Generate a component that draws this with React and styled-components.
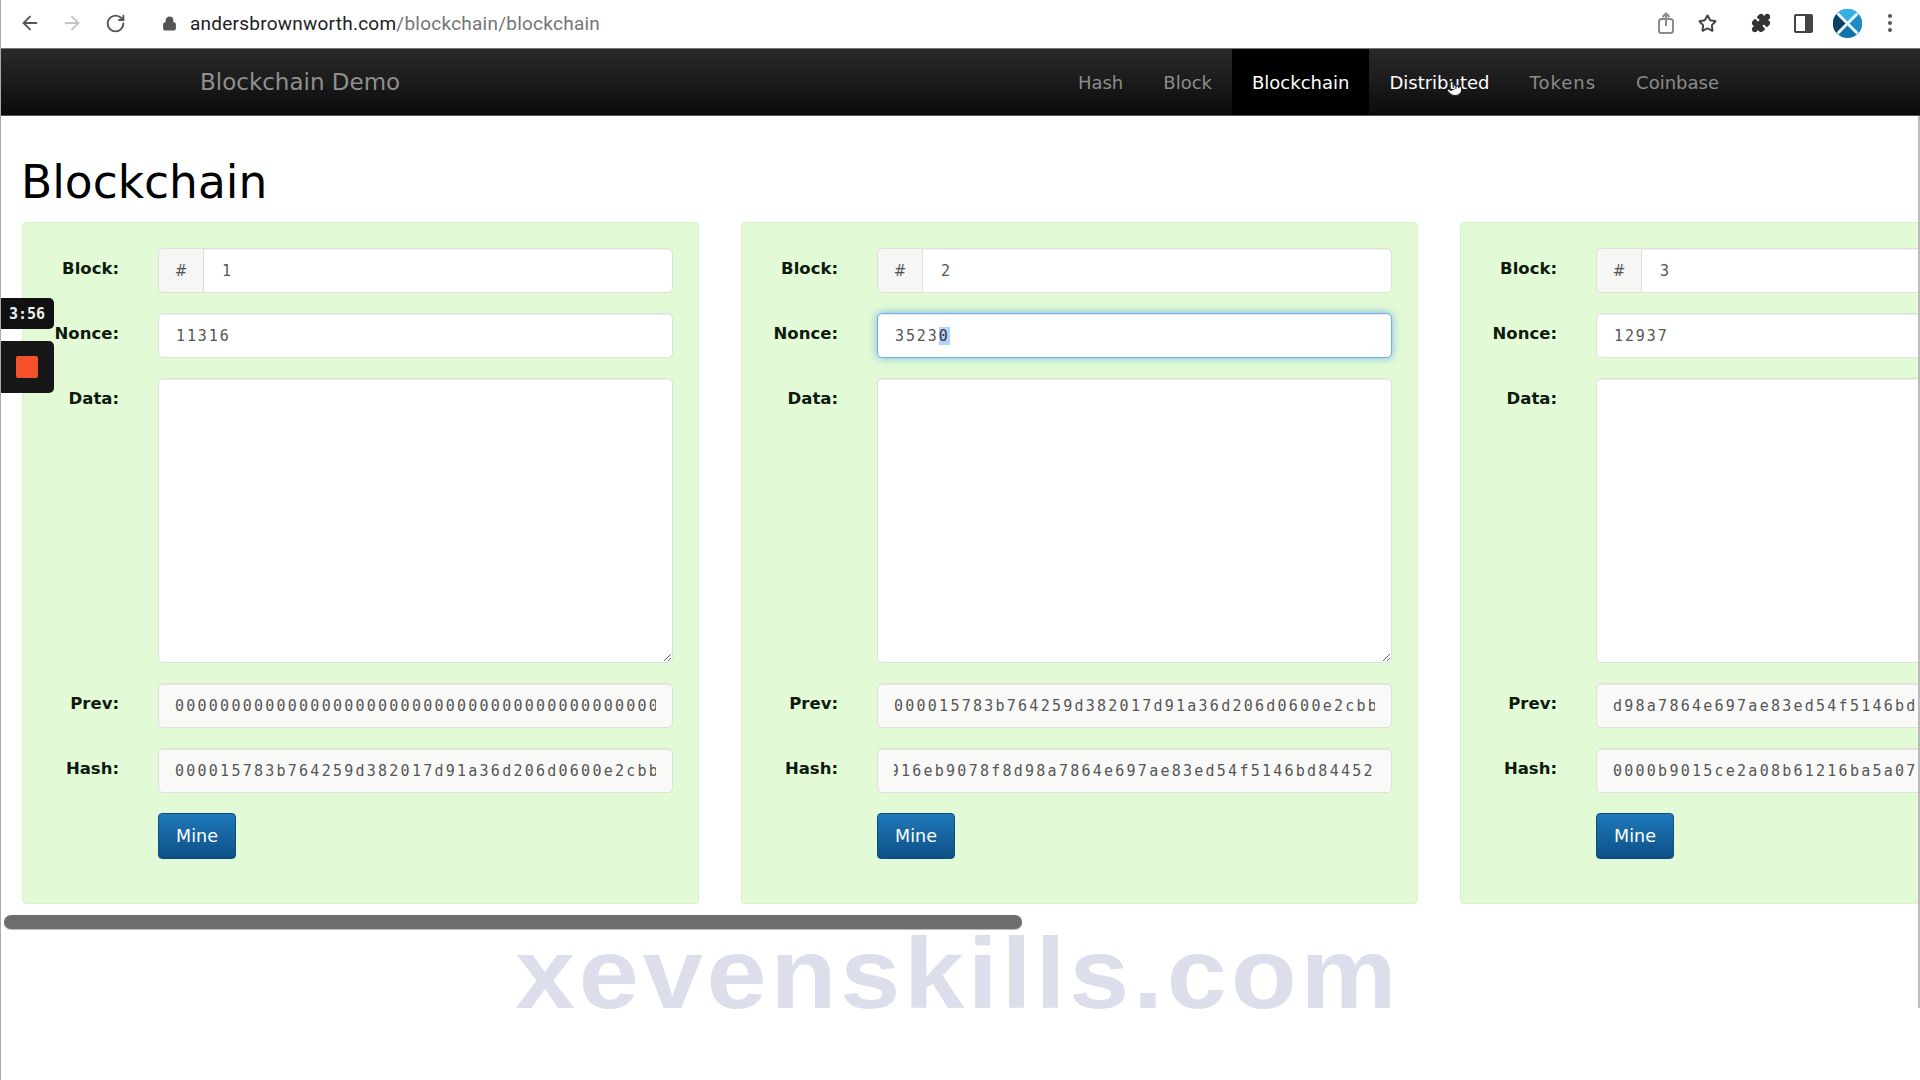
import React, { useEffect, useRef } from "react";
import styled, { createGlobalStyle } from "styled-components";
import { ArrowLeft, ArrowRight, RotateCw, Lock, Star, Puzzle, Pointer } from "lucide-react";

const blocks = [
  {
    id: 1,
    nonce: "11316",
    prev: "0000000000000000000000000000000000000000000000000000000000000000",
    hash: "000015783b764259d382017d91a36d206d0600e2cbb3567748f46a33fe9297cf",
  },
  {
    id: 2,
    nonce: "35230",
    focused: true,
    prev: "000015783b764259d382017d91a36d206d0600e2cbb3567748f46a33fe9297cf",
    hash: "3a7c0e916eb9078f8d98a7864e697ae83ed54f5146bd84452c0b3e71a2f6d958",
    scrollHash: 72,
  },
  {
    id: 3,
    nonce: "12937",
    prev: "d98a7864e697ae83ed54f5146bd84452c0b3e71a2f6d958",
    hash: "0000b9015ce2a08b61216ba5a0778545dcc2ab2b1e2d7f5f6c9ad4b1a1f0c2e4",
  },
];

const navItems = ["Hash", "Block", "Blockchain", "Distributed", "Tokens", "Coinbase"];

const GlobalStyle = createGlobalStyle`
  html, body {
    margin: 0;
    padding: 0;
    background: #fff;
    overflow: hidden;
  }
  * {
    box-sizing: border-box;
  }
`;

const Page = styled.div`
  position: relative;
  width: 1920px;
  height: 1080px;
  overflow: hidden;
  border-left: 1px solid #aaa;
  font-family: "DejaVu Sans", sans-serif;
`;

const Toolbar = styled.div`
  height: 48px;
  display: flex;
  align-items: center;
  padding: 0 27px 2px 18px;
  background: #fff;
  color: #5f6368;
`;

const ToolIcon = styled.span`
  display: flex;
  align-items: center;
  justify-content: center;
  flex: none;
  margin-left: ${(p) => p.$gap || 0}px;
  color: ${(p) => p.$color || "#555"};
`;

const Url = styled.div`
  margin-left: 13px;
  font-family: Roboto, sans-serif;
  font-size: 19px;
  letter-spacing: 0.24px;
  color: #757575;
  white-space: nowrap;

  b {
    font-weight: 400;
    color: #202124;
  }
`;

const Spacer = styled.div`
  flex: 1;
`;

const Navbar = styled.nav`
  height: 68px;
  display: flex;
  align-items: stretch;
  justify-content: space-between;
  padding: 0 181px 0 199px;
  background: linear-gradient(#2a2a2a, #0b0b0b);
  border-top: 1px solid #777;
  border-bottom: 1px solid #555;
`;

const Brand = styled.div`
  display: flex;
  align-items: center;
  font-size: 23px;
  color: #8f8f8f;
`;

const NavList = styled.div`
  display: flex;
`;

const NavLink = styled.div`
  position: relative;
  display: flex;
  align-items: center;
  padding: 0 20px;
  font-size: 18px;
  letter-spacing: ${(p) => (p.$wide ? 1 : 0)}px;
  color: ${(p) => (p.$active || p.$hover ? "#fff" : "#8c8c8c")};
  background: ${(p) => (p.$active ? "#000" : "transparent")};
`;

const Cursor = styled.span`
  position: absolute;
  left: 77px;
  top: 31px;
  display: flex;
  color: #222;
`;

const Main = styled.main`
  height: 892px;
  border-right: 2px solid #bbb;
`;

const Title = styled.h1`
  margin: 0;
  padding: 40px 0 12px 20px;
  font-size: 45.5px;
  line-height: 54px;
  font-weight: 400;
  color: #000;
`;

const CardRow = styled.div`
  display: flex;
  align-items: flex-start;
  gap: 42px;
  padding: 0 0 11px 21px;
  overflow: hidden;
`;

const ScrollThumb = styled.div`
  width: 1018px;
  height: 14px;
  margin-left: 3px;
  background: #6d6d6d;
  border-radius: 7px;
  box-shadow: 0 1px 1px #bbb;
`;

const Card = styled.section`
  flex: none;
  width: 677px;
  display: grid;
  grid-template-columns: 96px 515px;
  column-gap: 39px;
  row-gap: 20px;
  padding: 25px 0 44px 0;
  background: #e3fad6;
  border: 1px solid #dcf0d0;
  border-radius: 4px;
`;

const Label = styled.label`
  font-size: 16.5px;
  font-weight: 700;
  line-height: 41px;
  text-align: right;
  color: #0e1a0e;
`;

const Group = styled.div`
  display: flex;
  height: 45px;
`;

const Addon = styled.span`
  flex: none;
  width: 45px;
  display: flex;
  align-items: center;
  justify-content: center;
  font-size: 15px;
  color: #555;
  background: #f6f6f4;
  border: 1px solid #dbe3d6;
  border-right: 0;
  border-radius: 5px 0 0 5px;
`;

const Input = styled.input`
  width: 100%;
  height: 45px;
  min-width: 0;
  padding: 0 ${(p) => (p.$hash ? 16 : p.$joined ? 18 : 17)}px;
  font-family: "DejaVu Sans Mono", monospace;
  font-size: 15px;
  letter-spacing: ${(p) => (p.$hash ? 2.25 : 1.9)}px;
  color: #555;
  background: ${(p) => (p.$hash ? "#f9faf8" : "#fff")};
  border: 1px solid ${(p) => (p.$focused ? "#6cb0e6" : "#dbe3d6")};
  border-radius: ${(p) => (p.$joined ? "0 5px 5px 0" : "5px")};
  box-shadow: ${(p) =>
    p.$focused
      ? "inset 0 1px 1px rgba(0,0,0,.075), 0 0 8px rgba(102,175,233,.9)"
      : "inset 0 1px 1px rgba(0,0,0,.075)"};
  outline: none;

  &::selection {
    background: #b3d4fc;
    color: #334;
  }
`;

const Data = styled.textarea`
  display: block;
  width: 515px;
  height: 285px;
  padding: 8px 16px;
  resize: vertical;
  background: #fff;
  border: 1px solid #dbe3d6;
  border-radius: 5px;
  box-shadow: inset 0 1px 1px rgba(0, 0, 0, 0.075);
  outline: none;
`;

const MineButton = styled.button`
  grid-column: 2;
  width: 78px;
  height: 46px;
  padding: 0;
  font-family: "DejaVu Sans", sans-serif;
  font-size: 17.5px;
  color: #fff;
  background: linear-gradient(#1f79ba, #0d5087);
  border: 1px solid #0c4c80;
  border-radius: 4px;
`;

const Watermark = styled.div`
  position: absolute;
  left: 514px;
  top: 916px;
  font-family: "Liberation Sans", sans-serif;
  font-size: 100px;
  line-height: 115px;
  font-weight: 700;
  letter-spacing: 3.5px;
  color: #dcdeeb;
  white-space: nowrap;
  pointer-events: none;
  transform: scaleX(1.08);
  transform-origin: left center;
`;

const Recorder = styled.div`
  position: absolute;
  left: -1px;
  top: 298px;
  width: 54px;
  display: flex;
  flex-direction: column;
  gap: 12px;
`;

const Timer = styled.div`
  height: 31px;
  display: flex;
  align-items: center;
  justify-content: center;
  font-family: "DejaVu Sans Mono", monospace;
  font-size: 15px;
  font-weight: 700;
  color: #eee;
  background: #111;
  border-radius: 0 5px 5px 0;
`;

const StopPanel = styled.div`
  height: 52px;
  display: flex;
  align-items: center;
  justify-content: center;
  background: #171717;
  border-radius: 0 5px 5px 0;
`;

const StopSquare = styled.span`
  width: 22px;
  height: 22px;
  background: #f4512a;
  border-radius: 2px;
`;

const ShareIcon = () => (
  <svg width="16" height="22" viewBox="0 0 16 22" fill="none" stroke="#8a8a8a" strokeWidth="2">
    <rect x="1" y="7" width="14" height="14" rx="2.5" />
    <path d="M8 14V2M4.5 5 8 1.5 11.5 5" />
  </svg>
);

const PanelIcon = () => (
  <svg width="19" height="19" viewBox="0 0 19 19">
    <rect x="1" y="1" width="17" height="17" rx="1" fill="none" stroke="#444" strokeWidth="2" />
    <rect x="11" y="1" width="7" height="17" fill="#444" />
  </svg>
);

const Avatar = () => (
  <svg width="29" height="29" viewBox="0 0 29 29">
    <circle cx="14.5" cy="14.5" r="14.5" fill="#1273a8" />
    <path d="M14.5 14.5 4.2 4.2A14.5 14.5 0 0 0 4.2 24.8Z" fill="#0b3f63" />
    <path d="M14.5 14.5 4.2 4.2A14.5 14.5 0 0 1 24.8 4.2Z" fill="#35aee2" />
    <path d="M14.5 14.5 24.8 4.2A14.5 14.5 0 0 1 24.8 24.8Z" fill="#1b8cc4" />
    <path d="M4.5 4.5 24.5 24.5M24.5 4.5 4.5 24.5" stroke="#e8f6fb" strokeWidth="3" />
  </svg>
);

const KebabIcon = () => (
  <svg width="6" height="20" viewBox="0 0 6 20" fill="#555">
    <circle cx="3" cy="3" r="2" />
    <circle cx="3" cy="10" r="2" />
    <circle cx="3" cy="17" r="2" />
  </svg>
);

const BlockCard = ({ block }) => {
  const nonceRef = useRef(null);
  const hashRef = useRef(null);

  useEffect(() => {
    if (block.focused) {
      nonceRef.current.focus();
      nonceRef.current.setSelectionRange(4, 5);
    }
    if (block.scrollHash) {
      hashRef.current.scrollLeft = block.scrollHash;
    }
  }, [block]);

  return (
    <Card>
      <Label>Block:</Label>
      <Group>
        <Addon>#</Addon>
        <Input $joined readOnly value={block.id} />
      </Group>
      <Label>Nonce:</Label>
      <Input ref={nonceRef} $focused={block.focused} readOnly value={block.nonce} />
      <Label>Data:</Label>
      <Data readOnly />
      <Label>Prev:</Label>
      <Input $hash readOnly value={block.prev} />
      <Label>Hash:</Label>
      <Input ref={hashRef} $hash readOnly value={block.hash} />
      <MineButton>Mine</MineButton>
    </Card>
  );
};

const App = () => {
  return (
    <Page>
      <GlobalStyle />
      <Toolbar>
        <ToolIcon>
          <ArrowLeft size={22} strokeWidth={2} />
        </ToolIcon>
        <ToolIcon $gap={20} $color="#c4c4c4">
          <ArrowRight size={22} strokeWidth={2} />
        </ToolIcon>
        <ToolIcon $gap={22}>
          <RotateCw size={21} strokeWidth={2.2} />
        </ToolIcon>
        <ToolIcon $gap={36}>
          <Lock size={15} fill="#555" strokeWidth={2.4} />
        </ToolIcon>
        <Url>
          <b>andersbrownworth.com</b>/blockchain/blockchain
        </Url>
        <Spacer />
        <ToolIcon>
          <ShareIcon />
        </ToolIcon>
        <ToolIcon $gap={24} $color="#444">
          <Star size={19} strokeWidth={2.5} />
        </ToolIcon>
        <ToolIcon $gap={34} $color="#333">
          <Puzzle size={20} fill="#333" />
        </ToolIcon>
        <ToolIcon $gap={23}>
          <PanelIcon />
        </ToolIcon>
        <ToolIcon $gap={20}>
          <Avatar />
        </ToolIcon>
        <ToolIcon $gap={25}>
          <KebabIcon />
        </ToolIcon>
      </Toolbar>

      <Navbar>
        <Brand>Blockchain Demo</Brand>
        <NavList>
          {navItems.map((item) => (
            <NavLink
              key={item}
              $active={item === "Blockchain"}
              $hover={item === "Distributed"}
              $wide={item === "Tokens"}
            >
              {item}
              {item === "Distributed" && (
                <Cursor>
                  <Pointer size={17} fill="#fff" strokeWidth={1.6} />
                </Cursor>
              )}
            </NavLink>
          ))}
        </NavList>
      </Navbar>

      <Main>
        <Title>Blockchain</Title>
        <CardRow>
          {blocks.map((block) => (
            <BlockCard key={block.id} block={block} />
          ))}
        </CardRow>
        <ScrollThumb />
      </Main>

      <Watermark>xevenskills.com</Watermark>

      <Recorder>
        <Timer>3:56</Timer>
        <StopPanel>
          <StopSquare />
        </StopPanel>
      </Recorder>
    </Page>
  );
};

export default App;
